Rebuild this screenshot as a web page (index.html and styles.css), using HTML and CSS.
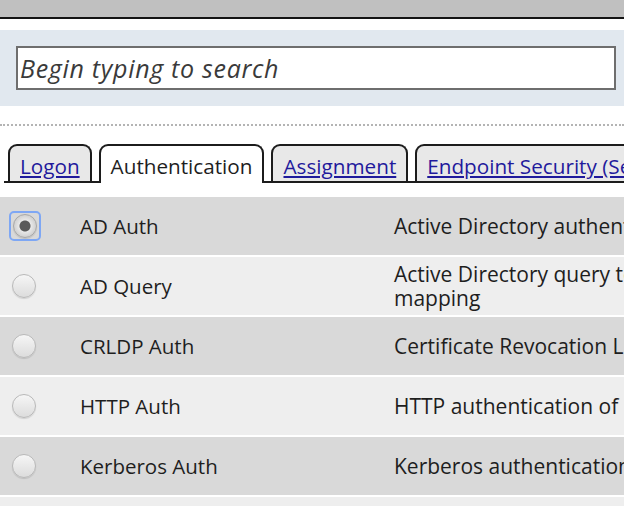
FILE: index.html
```html
<!DOCTYPE html>
<html>
<head>
<meta charset="utf-8">
<link rel="stylesheet" href="styles.css">
</head>
<body>
<div class="page">
  <div class="topbar"></div>
  <div class="search-panel">
    <input class="search" type="text" placeholder="Begin typing to search">
  </div>
  <div class="dots"></div>
  <div class="tabs">
    <a class="tab" href="#">Logon</a>
    <span class="tab active">Authentication</span>
    <a class="tab" href="#">Assignment</a>
    <a class="tab" href="#">Endpoint Security (Server)</a>
  </div>
  <table class="grid">
    <colgroup>
      <col class="w-radio">
      <col class="w-name">
      <col class="w-desc">
    </colgroup>
    <tr class="odd">
      <td class="c-radio"><span class="focus"><span class="radio on"></span></span></td>
      <td class="c-name">AD Auth</td>
      <td class="c-desc">Active Directory authentication</td>
    </tr>
    <tr class="even">
      <td class="c-radio"><span class="radio"></span></td>
      <td class="c-name">AD Query</td>
      <td class="c-desc">Active Directory query to user group mapping</td>
    </tr>
    <tr class="odd">
      <td class="c-radio"><span class="radio"></span></td>
      <td class="c-name">CRLDP Auth</td>
      <td class="c-desc">Certificate Revocation List check</td>
    </tr>
    <tr class="even">
      <td class="c-radio"><span class="radio"></span></td>
      <td class="c-name">HTTP Auth</td>
      <td class="c-desc">HTTP authentication of users</td>
    </tr>
    <tr class="odd">
      <td class="c-radio"><span class="radio"></span></td>
      <td class="c-name">Kerberos Auth</td>
      <td class="c-desc">Kerberos authentication of users</td>
    </tr>
    <tr class="even">
      <td class="c-radio"><span class="radio"></span></td>
      <td class="c-name">LDAP Auth</td>
      <td class="c-desc">LDAP authentication of users</td>
    </tr>
  </table>
</div>
</body>
</html>
```
FILE: styles.css
```css
html, body {
  margin: 0;
  padding: 0;
  background: #ffffff;
  overflow: hidden;
}
.page {
  width: 624px;
  height: 506px;
  overflow: hidden;
  font-family: "Open Sans", "Noto Sans", sans-serif;
  color: #1e1e1e;
}
.topbar {
  height: 17px;
  background: #c0c0c0;
  border-bottom: 2px solid #141414;
}
.search-panel {
  margin-top: 11px;
  background: #e1e8ef;
  padding: 16px 8px 16px 16px;
}
.search {
  display: block;
  box-sizing: border-box;
  width: 600px;
  height: 44px;
  margin: 0;
  border: 2px solid #6e6e6e;
  background: #ffffff;
  padding: 0 0 0 2px;
  font-family: "Open Sans", "Noto Sans", sans-serif;
  font-style: italic;
  font-size: 25px;
  letter-spacing: 0.7px;
  color: #333;
  outline: none;
}
.search::placeholder {
  color: #3a3a3a;
  opacity: 1;
}
.dots {
  margin-top: 18px;
  border-top: 2px dotted #b4b4b4;
}
.tabs {
  margin-top: 18px;
  margin-left: 4px;
  padding-left: 4px;
  display: flex;
  align-items: flex-end;
  gap: 7px;
  width: 1000px;
  border-bottom: 2px solid #1c1c1c;
}
.tab {
  flex: none;
  box-sizing: border-box;
  height: 37px;
  padding: 9px 10px 0 10px;
  border: 2px solid #1c1c1c;
  border-bottom: none;
  border-radius: 9px 9px 0 0;
  background: #e8e8e8;
  font-size: 20.7px;
  line-height: 22px;
  color: #1f1a9c;
  text-decoration: underline;
  white-space: nowrap;
}
.tab.active {
  background: #ffffff;
  color: #1e1e1e;
  text-decoration: none;
  margin-bottom: -2px;
  height: 39px;
}
.grid {
  margin-top: 12px;
  border-collapse: separate;
  border-spacing: 0 2px;
  table-layout: fixed;
  width: 780px;
}
.w-radio { width: 80px; }
.w-name { width: 314px; }
.w-desc { width: 386px; }
.grid td {
  padding: 0;
  height: 58px;
  vertical-align: middle;
  font-size: 20.5px;
  line-height: 24px;
}
.grid td.c-desc {
  font-size: 21px;
}
.odd td { background: #d9d9d9; }
.even td { background: #eeeeee; }
.c-radio {
  padding-left: 12px !important;
}
.c-desc {
  padding-right: 10px !important;
}
.radio {
  display: block;
  box-sizing: border-box;
  width: 24px;
  height: 24px;
  border-radius: 50%;
  border: 1px solid #b9b9b9;
  background: linear-gradient(#f6f6f6, #dcdcdc);
  box-shadow: 0 1px 1px rgba(0,0,0,0.12);
}
.radio.on {
  border-color: #a8a8a8;
  background: radial-gradient(circle, #5a5a5a 0, #5a5a5a 5px, #e8e8e8 6px, #d0d0d0 11px);
}
.focus {
  display: inline-block;
  margin-left: -3px;
  padding: 1px 2px;
  border: 2px solid #7ea7f4;
  border-radius: 5px;
  vertical-align: middle;
}
```
